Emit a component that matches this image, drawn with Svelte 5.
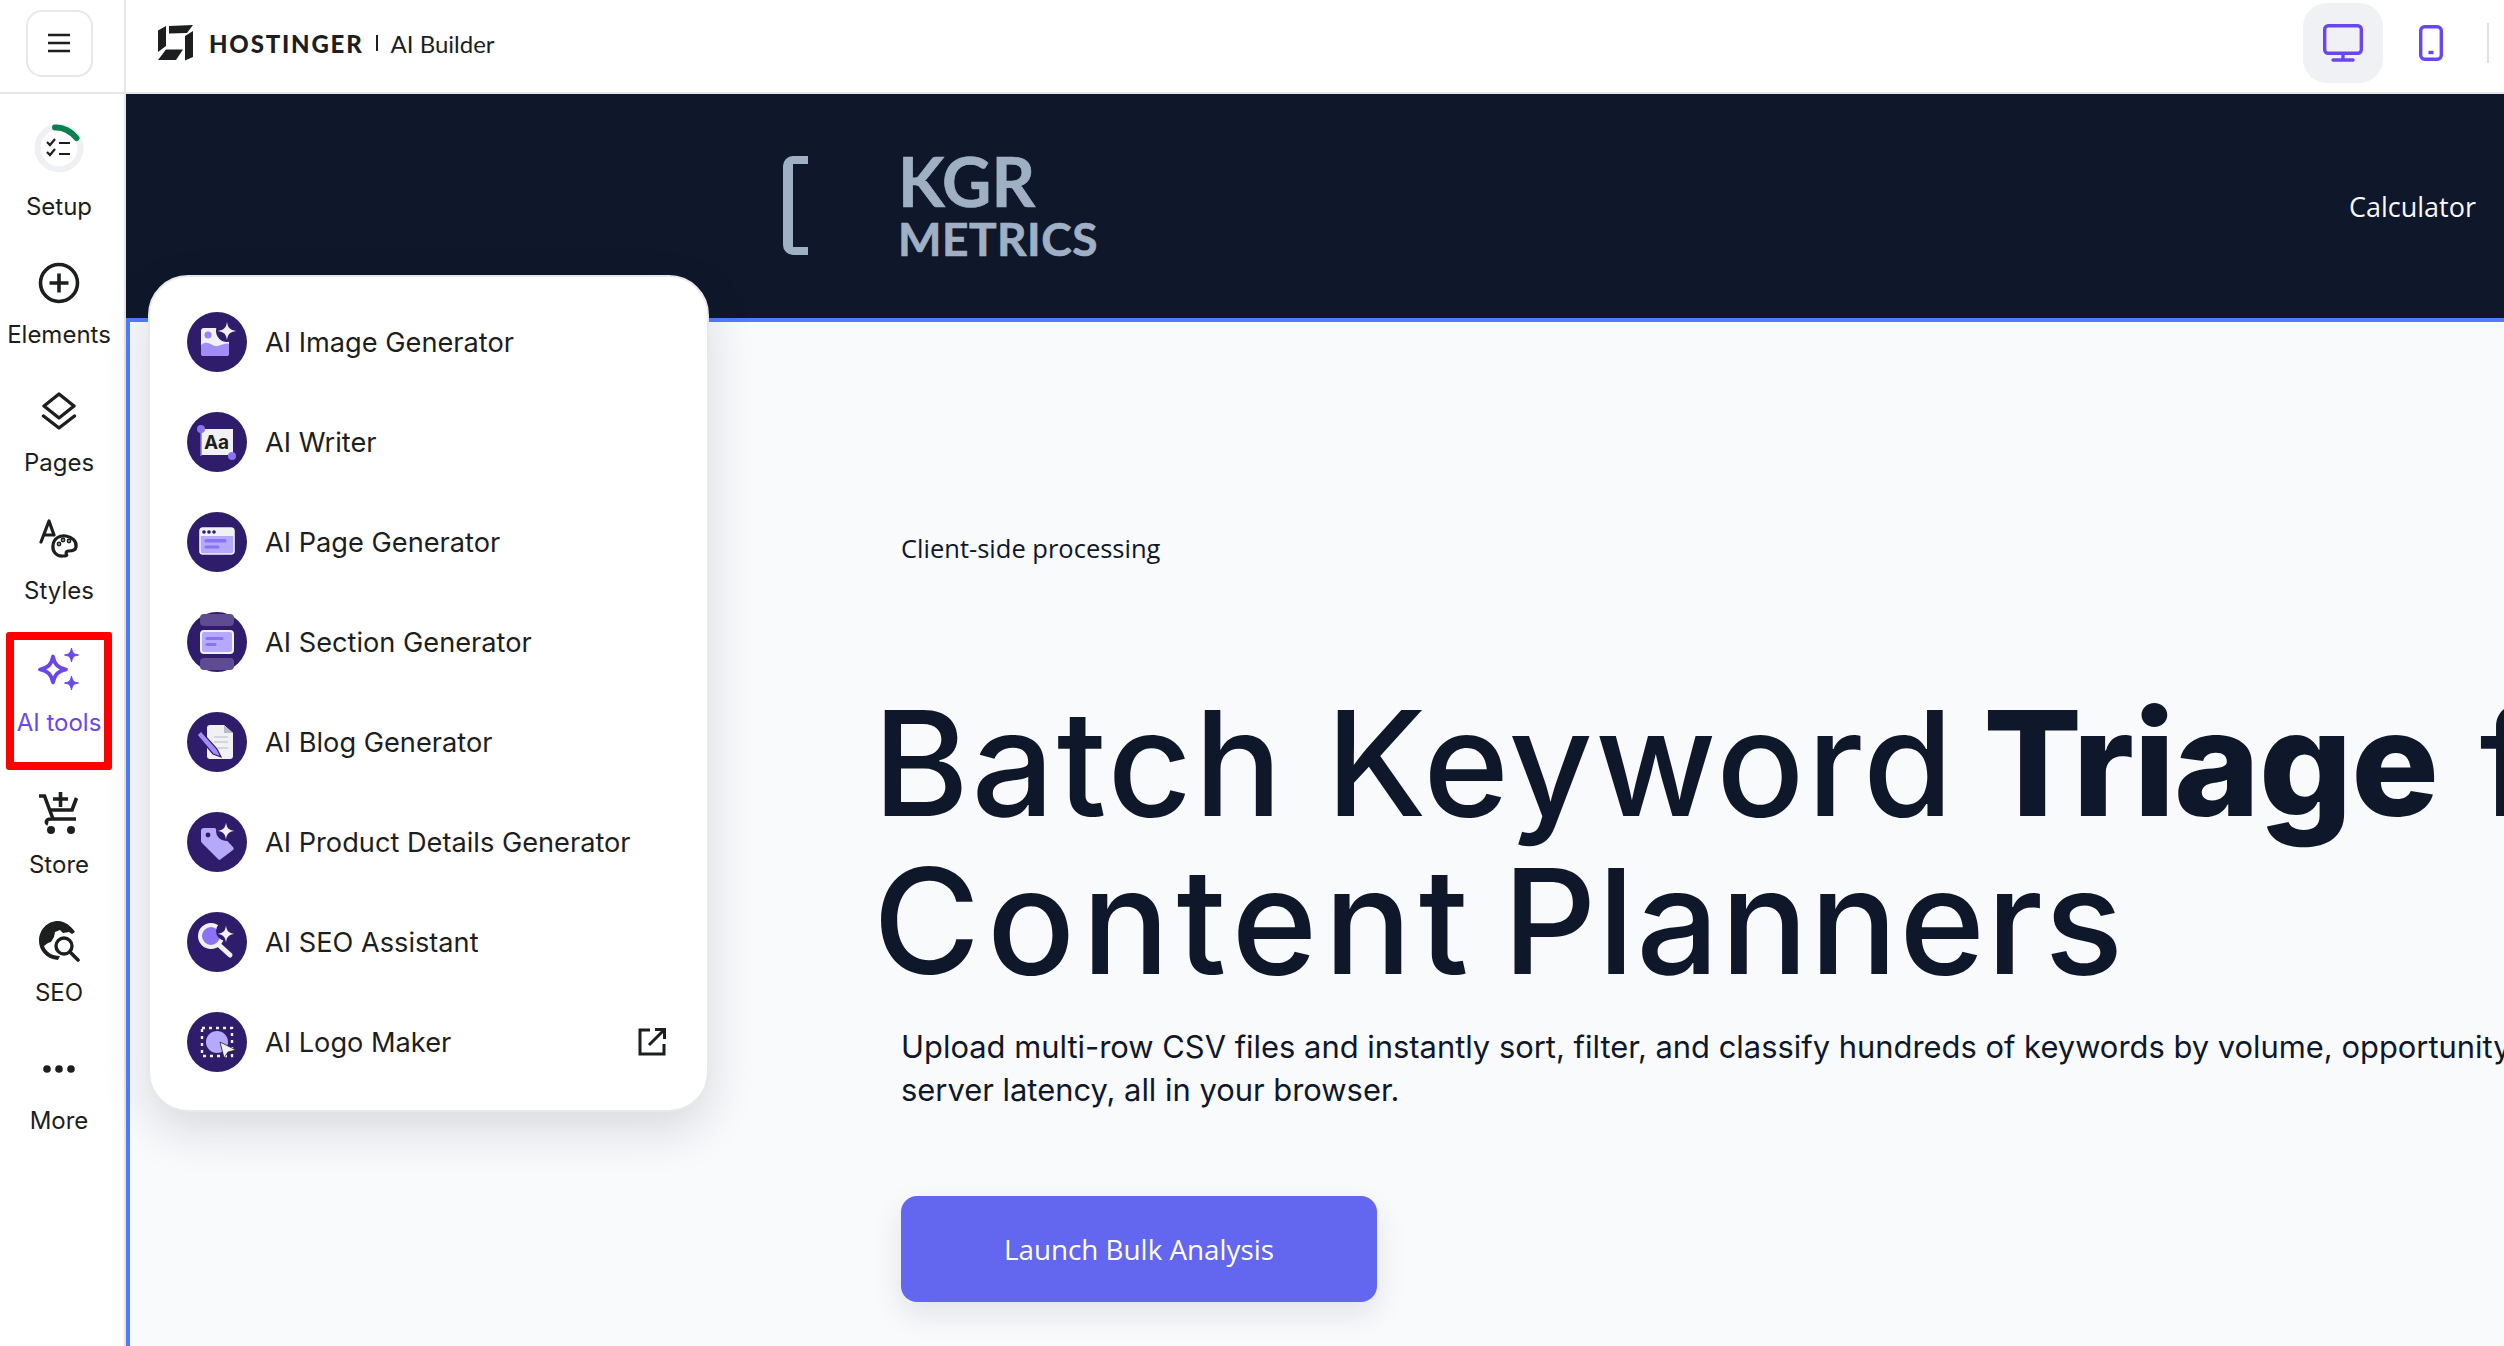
<script>
  const nav = [
    { label: 'Setup', icon: 'setup' },
    { label: 'Elements', icon: 'plus' },
    { label: 'Pages', icon: 'layers' },
    { label: 'Styles', icon: 'styles' },
    { label: 'AI tools', icon: 'spark', active: true },
    { label: 'Store', icon: 'cart' },
    { label: 'SEO', icon: 'seo' },
    { label: 'More', icon: 'more' }
  ];
  const tools = [
    { label: 'AI Image Generator', icon: 'image' },
    { label: 'AI Writer', icon: 'writer' },
    { label: 'AI Page Generator', icon: 'page' },
    { label: 'AI Section Generator', icon: 'section' },
    { label: 'AI Blog Generator', icon: 'blog' },
    { label: 'AI Product Details Generator', icon: 'tag' },
    { label: 'AI SEO Assistant', icon: 'search' },
    { label: 'AI Logo Maker', icon: 'logo', external: true }
  ];
  const star = 'M0-8C.8-2.6 2.6-.8 8 0 2.6.8.8 2.6 0 8-.8 2.6-2.6.8-8 0-2.6-.8-.8-2.6 0-8Z';
</script>

<div class="app">
  <header class="topbar">
    <div class="menu-cell">
      <button class="menu" aria-label="Menu">
        <svg width="22" height="22" viewBox="0 0 22 22"><path d="M0 3h22M0 11h22M0 19h22" stroke="#1d1e20" stroke-width="2.6"/></svg>
      </button>
    </div>
    <div class="brand">
      <svg class="brand-mark" width="36" height="36" viewBox="0 0 36 36" fill="#1d1e20">
        <path d="M11 1 35 0 29 8 11 8.500ZM0 5.500 8 1V21L0 27ZM27 11l8-5v26l-8 3.500ZM8 24.500h17L18 35H0Z"/>
      </svg>
      <span class="brand-name">HOSTINGER</span>
      <span class="brand-sep"></span>
      <span class="brand-sub">AI Builder</span>
      <div class="spacer"></div>
      <button class="device on" aria-label="Desktop">
        <svg width="40" height="38" viewBox="0 0 40 38" fill="none" stroke="#6a46ee" stroke-width="3.400"><rect x="1.700" y="1.700" width="36.600" height="27.600" rx="3.500"/><path d="M20 30v6M10 36h20" stroke-linecap="round"/></svg>
      </button>
      <button class="device" aria-label="Mobile">
        <svg width="24" height="36" viewBox="0 0 24 36" fill="none" stroke="#6a46ee" stroke-width="3.400"><rect x="1.700" y="1.700" width="20.600" height="32.600" rx="4"/><path d="M9.500 27.500h5"/></svg>
      </button>
      <span class="top-sep"></span>
    </div>
  </header>

  <div class="body">
    <nav class="sidebar">
      {#each nav as item}
        <div class="nav-item" class:active={item.active}>
          <span class="nav-icon" class:raised={item.icon === 'setup'}>
            {#if item.icon === 'setup'}
              <svg width="50" height="50" viewBox="0 0 50 50" fill="none">
                <circle cx="25" cy="25" r="21.500" stroke="#eff0f4" stroke-width="6"/>
                <path d="M21 4.500C29 3.800 38 9 42.500 15" stroke="#0e7f51" stroke-width="6" stroke-linecap="round"/>
                <path d="M13 19l3 3 5-6M13 29l3 3 5-6" stroke="#1d1e20" stroke-width="2.200"/>
                <path d="M25 20h11M25 31h11" stroke="#1d1e20" stroke-width="2.200"/>
              </svg>
            {:else if item.icon === 'plus'}
              <svg width="42" height="42" viewBox="0 0 42 42" fill="none" stroke="#1d1e20" stroke-width="3.600"><circle cx="21" cy="21" r="18.500"/><path d="M21 11.500v19M11.500 21h19" /></svg>
            {:else if item.icon === 'layers'}
              <svg width="36" height="38" viewBox="0 0 36 38" fill="none" stroke="#1d1e20" stroke-width="3.400" stroke-linejoin="round" stroke-linecap="round"><path d="M18 2 33 14 18 26 3 14Z"/><path d="M2.500 24 18 36 33.500 24"/></svg>
            {:else if item.icon === 'styles'}
              <svg width="40" height="40" viewBox="0 0 40 40" fill="none" stroke="#1d1e20" stroke-width="3.200" stroke-linecap="round" stroke-linejoin="round">
                <path d="M2 23 10 2l5 14M5 16h8"/>
                <path d="M24 37c-7 .5-11-5-10-11 1-7 7-10 13-9 6 1 11 5 10 11-.5 4-5 4-7.500 4-3 0-2.500 3-2 3.500.5 1 0 1.500-3.500 1.500Z"/>
                <circle cx="20" cy="25" r=".8"/><circle cx="24" cy="21" r=".8"/><circle cx="30" cy="22" r=".8"/>
              </svg>
            {:else if item.icon === 'spark'}
              <svg width="42" height="42" viewBox="0 0 42 42">
                <path transform="translate(15 21.500)" d="M0-13C1.500-5 5-1.500 13 0 5 1.500 1.500 5 0 13-1.500 5-5 1.500-13 0-5-1.500-1.500-5 0-13Z" fill="none" stroke="#6a46ee" stroke-width="3.800" stroke-linejoin="round"/>
                <path transform="translate(33.500 7)" d="M0-7C1-2 2-1 7 0 2 1 1 2 0 7-1 2-2 1-7 0-2-1-1-2 0-7Z" fill="#6a46ee" stroke="#6a46ee"/>
                <path transform="translate(33.500 35)" d="M0-7C1-2 2-1 7 0 2 1 1 2 0 7-1 2-2 1-7 0-2-1-1-2 0-7Z" fill="#6a46ee" stroke="#6a46ee"/>
              </svg>
            {:else if item.icon === 'cart'}
              <svg width="40" height="42" viewBox="0 0 40 42" fill="none" stroke="#1d1e20" stroke-width="3.600">
                <path d="M0 4h5.500L14 27M37.500 6 33 18H10M9 32c-3-1-2-5 3-5h25" />
                <path d="M21.500 0v15M14 7h15" />
                <circle cx="12" cy="38" r="4" fill="#1d1e20" stroke="none"/>
                <circle cx="32" cy="38" r="4" fill="#1d1e20" stroke="none"/>
              </svg>
            {:else if item.icon === 'seo'}
              <svg width="42" height="42" viewBox="0 0 42 42" fill="none">
                <path d="M20 1C9 1 1 10 1 21c0 9 7 18 19 19l2-4c-8 0-14-4-16-10l4-3 3-1 3-5 1-5 5-2 3 3 6-1 3 2 3-2C33 6 27 1 20 1Z" fill="#1d1e20"/>
                <circle cx="26" cy="26" r="8" stroke="#1d1e20" stroke-width="3.400"/>
                <path d="M32 32l8 8" stroke="#1d1e20" stroke-width="3.600" stroke-linecap="round"/>
              </svg>
            {:else}
              <svg width="32" height="10" viewBox="0 0 32 10" fill="#1d1e20"><circle cx="4" cy="5" r="3.800"/><circle cx="16" cy="5" r="3.800"/><circle cx="28" cy="5" r="3.800"/></svg>
            {/if}
          </span>
          <span class="nav-label">{item.label}</span>
        </div>
      {/each}
    </nav>

    <main class="preview">
      <section class="site-head">
        <div class="site-logo">
          <span class="bracket"></span>
          <div class="logo-text"><span class="kgr">KGR</span><span class="metrics">METRICS</span></div>
        </div>
        <a class="site-link" href="#calc">Calculator</a>
      </section>
      <section class="hero">
        <p class="eyebrow">Client-side processing</p>
        <h1>Batch Keyword <b>Triage</b> for<br /><span class="w1">Content</span> <span class="w2">Planners</span></h1>
        <p class="lead">Upload multi-row CSV files and instantly sort, filter, and classify hundreds of keywords by volume, opportunity, and intent with no<br />server latency, all in your browser.</p>
        <button class="cta">Launch Bulk Analysis</button>
      </section>
    </main>

    <aside class="panel">
      {#each tools as tool}
        <div class="tool">
          <span class="tool-icon">
            <svg width="60" height="60" viewBox="0 0 60 60">
              <circle cx="30" cy="30" r="30" fill="#2f1c6a"/>
              {#if tool.icon === 'image'}
                <rect x="14" y="16" width="28" height="28" rx="3" fill="#f1f1f4"/>
                <path d="M14 33c6-5 10 0 14 1s10-4 14-2v9a3 3 0 0 1-3 3H17a3 3 0 0 1-3-3Z" fill="#a08df5"/>
                <circle cx="21" cy="23" r="3.600" fill="#9a85f5"/>
                <circle cx="40" cy="19" r="11" fill="#2f1c6a"/>
                <path transform="translate(40 19) scale(1.150)" d={star} fill="#f1f1f4"/>
              {:else if tool.icon === 'writer'}
                <rect x="14" y="17" width="32" height="26" fill="#f1f1f4"/>
                <path d="M14 15v29" stroke="#8a72f0" stroke-width="1.500"/>
                <circle cx="14" cy="17" r="4" fill="#8a72f0"/>
                <circle cx="45" cy="44" r="4" fill="#8a72f0"/>
                <text x="29.500" y="37" text-anchor="middle" class="aa">Aa</text>
              {:else if tool.icon === 'page'}
                <rect x="13" y="16" width="34" height="26" rx="3" fill="#b4a9fb" stroke="#f1f1f4" stroke-width="1.600"/>
                <path d="M13 24v-5a3 3 0 0 1 3-3h28a3 3 0 0 1 3 3v5Z" fill="#f1f1f4"/>
                <circle cx="17" cy="20" r="1.800" fill="#2f1c6a"/><circle cx="22" cy="20" r="1.800" fill="#2f1c6a"/><circle cx="27" cy="20" r="1.800" fill="#2f1c6a"/>
                <rect x="17.500" y="27" width="22" height="3.400" rx="1.500" fill="#8a72f0"/>
                <rect x="17.500" y="33.500" width="15" height="3" rx="1.500" fill="#8a72f0"/>
              {:else if tool.icon === 'section'}
                <path d="M13 6a4 4 0 0 1 4-4h26a4 4 0 0 1 4 4v4a4 4 0 0 1-4 4H17a4 4 0 0 1-4-4Z" fill="#5e4b92"/>
                <path d="M13 50a4 4 0 0 1 4-4h26a4 4 0 0 1 4 4v4a4 4 0 0 1-4 4H17a4 4 0 0 1-4-4Z" fill="#5e4b92"/>
                <rect x="14" y="19" width="32" height="22" rx="3" fill="#b4a9fb" stroke="#f1f1f4" stroke-width="2"/>
                <rect x="18.500" y="25" width="18" height="3" rx="1.500" fill="#8a72f0"/>
                <rect x="18.500" y="31" width="11" height="3" rx="1.500" fill="#8a72f0"/>
              {:else if tool.icon === 'blog'}
                <path d="M20 16a3 3 0 0 1 3-3h14l9 8v23a3 3 0 0 1-3 3H23a3 3 0 0 1-3-3Z" fill="#f1f1f4"/>
                <path d="M37 13v8h9Z" fill="#b8bcc8"/>
                <path d="M27 25h14M27 30h14M31 36h10" stroke="#b8bcc8" stroke-width="1.200"/>
                <path d="M10 23l4-4 16 18 4 8-8-3Z" fill="#a08df5" stroke="#2f1c6a" stroke-width="1.200"/>
              {:else if tool.icon === 'tag'}
                <path d="M14 19a3 3 0 0 1 3-3h11l18 19a2 2 0 0 1 0 3L34 47a2 2 0 0 1-3 0L15 31a3 3 0 0 1-1-2Z" fill="#b4a9fb"/>
                <circle cx="21" cy="23" r="2.400" fill="#2f1c6a"/>
                <circle cx="39" cy="19" r="10" fill="#2f1c6a"/>
                <path transform="translate(39 19) scale(1.050)" d={star} fill="#f1f1f4"/>
              {:else if tool.icon === 'search'}
                <circle cx="24" cy="24" r="11" fill="#8a72f0" stroke="#f1f1f4" stroke-width="4"/>
                <path d="M32 33l11 10" stroke="#f1f1f4" stroke-width="5" stroke-linecap="round"/>
                <circle cx="39" cy="19" r="10" fill="#2f1c6a"/>
                <path transform="translate(39 22) scale(1.050)" d={star} fill="#f1f1f4"/>
              {:else}
                <rect x="15" y="16" width="30" height="28" fill="none" stroke="#f1f1f4" stroke-width="2.400" stroke-dasharray="3 4"/>
                <circle cx="30" cy="30" r="11" fill="#b4a9fb"/>
                <path d="M33 30 37 46 41 40 49 38Z" fill="#f1f1f4" stroke="#1d1e20" stroke-width=".8"/>
              {/if}
            </svg>
          </span>
          <span class="tool-label">{tool.label}</span>
          {#if tool.external}
            <svg class="ext" width="28" height="28" viewBox="0 0 28 28" fill="none" stroke="#1d1e20" stroke-width="3"><path d="M12 2H2v24h24V16"/><path d="M11 17 26 2M17 1.500h9.500V11"/></svg>
          {/if}
        </div>
      {/each}
    </aside>
  </div>
</div>

<style>
  :global(body) { margin: 0; overflow: hidden; background: #fff; }
  .app { width: 2504px; height: 1346px; overflow: hidden; font-family: "Inter", "Liberation Sans", sans-serif; color: #1d1e20; display: flex; flex-direction: column; }
  button { font: inherit; cursor: pointer; }

  .topbar { height: 86px; padding-bottom: 6px; flex: none; display: flex; border-bottom: 2px solid #e6e6e8; box-sizing: content-box; }
  .menu-cell { width: 118px; padding-right: 6px; margin-bottom: -6px; padding-bottom: 6px; flex: none; display: flex; align-items: center; justify-content: center; border-right: 2px solid #e6e6e8; }
  .menu { width: 67px; height: 67px; border: 2px solid #e8e8ea; border-radius: 16px; background: #fff; display: flex; align-items: center; justify-content: center; padding: 0; }
  .brand { flex: 1; display: flex; align-items: center; padding-left: 32px; }
  .brand-name { margin-left: 15px; font-family: "Lato", sans-serif; font-weight: 900; font-size: 24px; letter-spacing: 1.800px; color: #1d1e20; }
  .brand-sep { width: 2px; height: 16px; background: #1d1e20; margin: 0 13px 0 12px; }
  .brand-sub { font-family: "Lato", sans-serif; font-size: 24px; color: #1d1e20; }
  .spacer { flex: 1; }
  .device { width: 80px; height: 80px; border: 0; border-radius: 24px; background: transparent; display: flex; align-items: center; justify-content: center; padding: 0; }
  .device.on { background: #f0f1f5; }
  .device + .device { margin-left: 8px; }
  .top-sep { width: 2px; height: 40px; background: #e0e0e2; margin: 0 15px 0 16px; }

  .body { flex: 1; display: flex; position: relative; min-height: 0; }
  .sidebar { width: 118px; padding-right: 6px; flex: none; border-right: 2px solid #e6e6e8; background: #fff; display: flex; flex-direction: column; }
  .nav-item { height: 128px; flex: none; position: relative; display: flex; flex-direction: column; align-items: center; }
  .nav-icon { height: 78px; margin-top: 24px; display: flex; align-items: center; justify-content: center; }
  .nav-icon.raised svg { margin-bottom: 14px; }
  .nav-label { font-size: 24px; line-height: 30px; color: #1d1e20; white-space: nowrap; }
  .nav-item.active { height: 146px; }
  .nav-item.active::after { content: ""; position: absolute; left: 6px; top: 26px; width: 106px; height: 138px; border: 8px solid #f00; border-radius: 3px; box-sizing: border-box; }
  .nav-item.active .nav-label { color: #6a46ee; }

  .preview { flex: 1; min-width: 0; overflow: hidden; display: flex; flex-direction: column; background: #f8fafc; }
  .site-head { height: 224px; flex: none; background: #0f172a; display: flex; align-items: center; justify-content: space-between; padding: 0 28px 0 657px; }
  .site-logo { display: flex; align-items: flex-start; height: 100px; }
  .bracket { width: 25px; height: 99px; border: solid #a0b0c4; border-width: 8px 0 8px 10px; border-radius: 10px 0 0 10px; box-sizing: border-box; }
  .logo-text { margin-left: 90px; display: flex; flex-direction: column; color: #a0b0c4; font-family: "Lato", sans-serif; font-weight: 700; -webkit-text-stroke: .7px #a0b0c4; }
  .kgr { font-size: 68px; line-height: 49px; height: 66px; }
  .metrics { font-size: 46px; line-height: 33px; letter-spacing: .5px; }
  .site-link { color: #f8fafc; font-family: "Open Sans", sans-serif; font-size: 27px; text-decoration: none; }

  .hero { flex: 1; border-left: 4px solid #4f7cff; border-top: 4px solid #4f7cff; padding: 206px 0 0 771px; white-space: nowrap; color: #0f172a; }
  .eyebrow { margin: 0; font-family: "Open Sans", sans-serif; font-size: 25.500px; line-height: 40px; }
  h1 { margin: 116px 0 0 -28px; font-size: 146px; line-height: 158px; font-weight: 500; letter-spacing: 2.500px; }
  h1 b { font-weight: 800; letter-spacing: -1px; margin-left: -14px; }
  .w1 { letter-spacing: 6.800px; }
  .w2 { letter-spacing: 1.500px; margin-left: -14px; }
  .lead { margin: 25px 0 0; font-size: 30.900px; line-height: 43px; }
  .cta { margin-top: 85px; width: 476px; height: 106px; border: 0; border-radius: 16px; background: #6366ef; color: #fff; font-family: "Open Sans", sans-serif; font-weight: 500; font-size: 27.800px; box-shadow: 0 12px 30px rgba(15, 24, 42, .1); display: block; }

  .panel { position: absolute; left: 148px; top: 181px; width: 561px; height: 837px; box-sizing: border-box; background: #fff; border: 2px solid #e6e8ea; border-radius: 40px; padding: 15px 0 0 37px; box-shadow: 0 18px 48px rgba(20, 24, 40, .14); }
  .tool { height: 100px; display: flex; align-items: center; position: relative; }
  .tool-icon { width: 60px; height: 60px; flex: none; }
  .tool-label { margin-left: 18px; font-size: 27.200px; white-space: nowrap; color: #1d1e20; }
  .ext { position: absolute; right: 41px; top: 36px; }
  .aa { font: 700 19px "Inter", sans-serif; fill: #1d1e20; }
</style>
